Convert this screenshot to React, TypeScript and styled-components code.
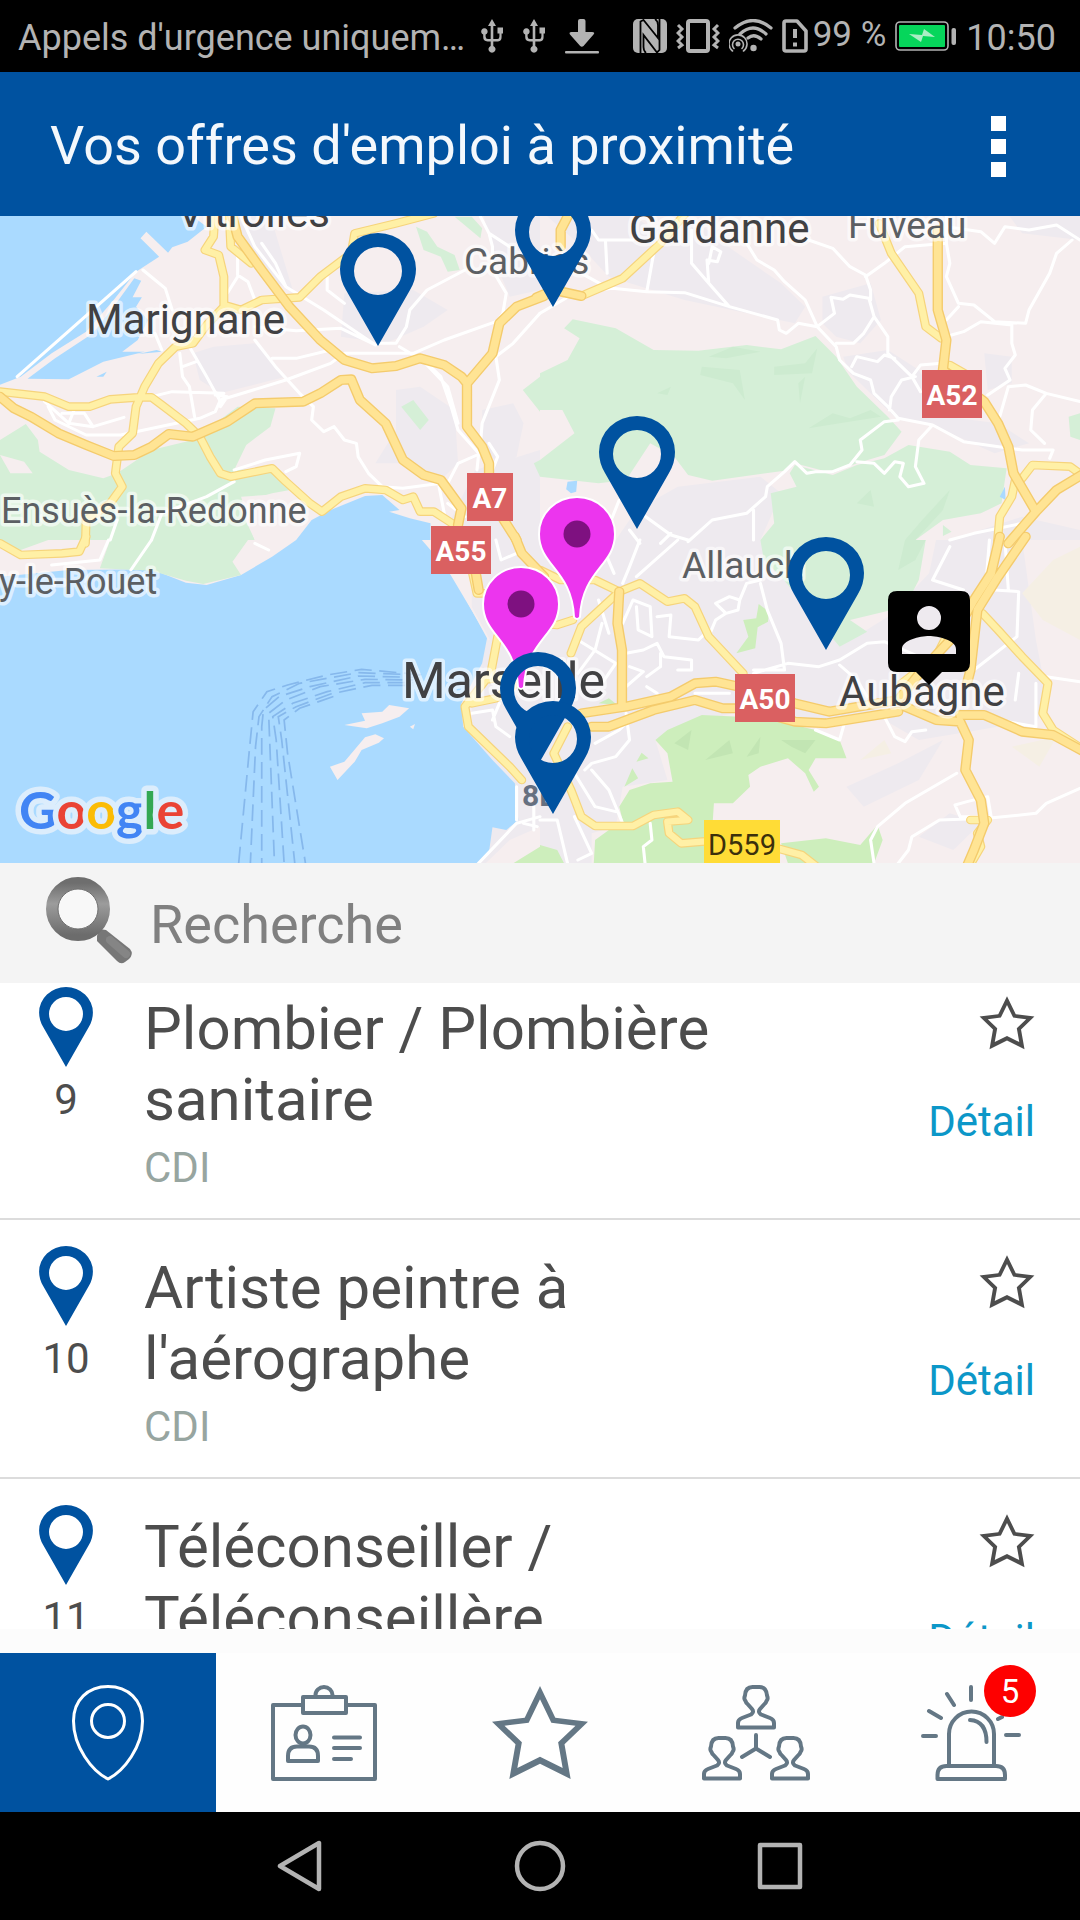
import React, { useLayoutEffect, useRef, useState } from "react";
import styled, { createGlobalStyle } from "styled-components";

const BLUE = "#0052a0";
const SLATE = "#647785";
const SILVER = "#b3b3b3";
const INK = "#4d4d4d";

const GlobalStyle = createGlobalStyle`
  * { box-sizing: border-box; }
  body { margin: 0; background: #fcfcfc; }
  button, input { font: inherit; color: inherit; border: 0; margin: 0; padding: 0; background: none; }
  button { cursor: pointer; }
  svg { display: block; flex: none; }
`;

const Screen = styled.div`
  display: flex;
  flex-direction: column;
  height: 100vh;
  overflow: hidden;
  font-family: Roboto, "Noto Sans", sans-serif;
  color: ${INK};
`;

/* ---------- status bar ---------- */

const StatusBar = styled.div`
  display: flex;
  align-items: center;
  justify-content: space-between;
  flex: none;
  height: 72px;
  padding: 0 24px 0 18px;
  background: #000;
  color: ${SILVER};
  font-size: 36px;
  line-height: 42px;
  white-space: nowrap;
`;

const StatusGroup = styled.div<{ $gap: number }>`
  display: flex;
  align-items: center;
  gap: ${(p) => p.$gap}px;
`;

const StatusText = styled.span`
  padding-top: 4px;
`;

const BatteryLevel = styled.span`
  font-size: 35px;
  padding-bottom: 2px;
`;

const UsbIcon = () => (
  <svg width="22" height="34" viewBox="0 0 22 34" fill={SILVER}>
    <path d="M11 0 15 7H12.300V20H16.500Q18.400 20 18.400 17.500V14.500H16.500V8.500H22V14.500H20.600V18Q20.600 22.400 17 22.400H12.300V27A3.500 3.500 0 1 1 9.700 27V22.400H6.500Q2.200 22.400 2.200 18V15.500A3.200 3.200 0 1 1 4.600 15.500V17.500Q4.600 20 7 20H9.700V7H7Z" />
  </svg>
);

const DownloadIcon = () => (
  <svg width="34" height="35" viewBox="0 0 34 35" fill={SILVER}>
    <path d="M13 2Q13 0 15 0H18.500Q20.500 0 20.500 2V13H27Q30.500 13 28.500 15.500L18.500 27Q16.800 28.600 15.200 27L5 15.500Q3.500 13 6.500 13H13Z" />
    <rect y="32" width="34" height="2.500" rx="1" />
  </svg>
);

const NfcIcon = () => (
  <svg width="34" height="34" viewBox="0 0 34 34" fill={SILVER}>
    <rect width="34" height="34" rx="5" />
    <path d="M7.500 0V34M26.500 0V34M8 2 26 28" fill="none" stroke="none" />
    <path d="M7.500 34V2.500L10.500 1 25 19V6Q25 2 22 0" fill="none" stroke="#000" strokeWidth="1.800" />
    <path d="M26.500 0V31L24 33.500 10.500 16V28Q10.500 32 13 34" fill="none" stroke="#000" strokeWidth="1.800" />
  </svg>
);

const VibrateIcon = () => (
  <svg width="44" height="34" viewBox="0 0 44 34" fill="none" stroke={SILVER}>
    <rect x="12" y="2" width="20" height="30" rx="2" strokeWidth="4" />
    <path d="M2 6 6 10 2 14 6 18 2 22 6 26 2 29M42 6 38 10 42 14 38 18 42 22 38 26 42 29" strokeWidth="3" />
  </svg>
);

const WifiIcon = () => (
  <svg width="44" height="34" viewBox="0 0 44 34" fill="none" stroke={SILVER} strokeWidth="3.200" strokeLinecap="round">
    <path d="M6 9Q24-6 42 9M11 15Q24 3 37 15M19 19Q25 14 32 20" />
    <circle cx="24.500" cy="29" r="3.200" fill={SILVER} stroke="none" />
    <circle cx="9" cy="25" r="2.500" fill={SILVER} stroke="none" />
    <path d="M5 29.500A5.500 5.500 0 1 1 13 29.500M3.500 32A9 9 0 1 1 14.500 32" strokeWidth="1.600" />
  </svg>
);

const SimIcon = () => (
  <svg width="26" height="34" viewBox="0 0 26 34" fill="none" stroke={SILVER}>
    <path d="M4 2H15L24 12V30Q24 32 22 32H4Q2 32 2 30V4Q2 2 4 2Z" strokeWidth="3.600" strokeLinejoin="round" />
    <path d="M13 10V19M13 23.500V27.500" strokeWidth="4" />
  </svg>
);

const BatteryIcon = () => (
  <svg width="62" height="30" viewBox="0 0 62 30">
    <rect x="1" y="1" width="52" height="28" rx="4" fill="none" stroke={SILVER} strokeWidth="1.600" />
    <rect x="4" y="4" width="46" height="22" rx="1" fill="#06d65b" />
    <path d="M14 13 27 14 29 8 40 16 28 15 26 21Z" fill="#a9eec4" />
    <rect x="56.500" y="7" width="4.500" height="17" rx="2" fill={SILVER} />
  </svg>
);

/* ---------- title bar ---------- */

const TitleBar = styled.header`
  display: flex;
  align-items: center;
  justify-content: space-between;
  flex: none;
  height: 144px;
  padding: 4px 64px 0 50px;
  background: ${BLUE};
  color: #f4f8fc;
`;

const Title = styled.h1`
  margin: 0;
  font-size: 54px;
  line-height: 64px;
  font-weight: 400;
`;

const MenuButton = styled.button`
  display: flex;
  flex-direction: column;
  align-items: center;
  gap: 8px;
  padding: 10px;
`;

const MenuDot = styled.span`
  width: 15px;
  height: 15px;
  background: #fff;
`;

/* ---------- map ---------- */

const MapArea = styled.section`
  flex: none;
  width: 100%;
  aspect-ratio: 1080 / 647;
  overflow: hidden;
`;

const MapCanvas = styled.svg`
  width: 100%;
  height: 100%;
`;

const PlaceName = styled.text<{ $size: number; $minor?: boolean }>`
  font-size: ${(p) => p.$size}px;
  fill: ${(p) => (p.$minor ? "#5c5f63" : "#414143")};
  stroke: #fff;
  stroke-opacity: 0.6;
  stroke-width: 7px;
  stroke-linejoin: round;
  paint-order: stroke;
`;

const ShieldText = styled.text<{ $dark?: boolean }>`
  font-size: ${(p) => (p.$dark ? 29 : 28)}px;
  font-weight: ${(p) => (p.$dark ? 400 : 700)};
  fill: ${(p) => (p.$dark ? "#3b300c" : "#fff")};
  text-anchor: middle;
`;

const DistrictText = styled.text`
  font-size: 30px;
  font-weight: 700;
  fill: #667080;
`;

const LogoText = styled.text`
  font-family: Lato, sans-serif;
  font-size: 52px;
  font-weight: 700;
  stroke: #dcedfc;
  stroke-width: 11px;
  stroke-linejoin: round;
  paint-order: stroke;
`;

type Quadrant = {
  x: number;
  y: number;
  areas: [string, string][];
  streets: string[];
  roads: string[];
  motorways: string[];
};

const WATER = "#aadaff";
const LAND = "#f6eeef";
const TOWN = "#eeeaef";
const PARK = "#d5efd7";
const WOOD = "#cdeebc";
const SHADE = "#cdebd0";

const QUADRANTS: Quadrant[] = [
  {
    x: 0,
    y: 210,
    areas: [
      [TOWN, "M560 430 620 410 740 400 830 500 640 550 580 510ZM1150 540 1220 530 1320 600 1330 760 1280 810 1200 760 1090 760 1150 660ZM1400 600 1490 580 1520 640 1500 740 1450 770 1400 700ZM690 0H780L850 240 760 200 700 120ZM1000 250 1200 240 1300 300 1230 350 1120 400 990 380ZM1400 0H1568V240L1480 260 1440 160ZM1380 780 1568 720V990H1280Z"],
      [WATER, "M0 0H535L600 50 545 95 500 112 488 128 425 65 408 85 462 140 395 185 330 270 250 365 150 430 60 500 0 524Z"],
      [WATER, "M390 205 410 212 385 262 412 262 395 290 430 330 400 390 355 425 420 425 300 455 200 508 80 506 160 445 270 370 330 290ZM455 420 470 425 400 432ZM280 500 310 485 300 500Z"],
      [PARK, "M0 690 75 642 110 690 115 725 200 780 300 805 340 790 440 720 560 690 690 590 800 595 785 650 715 705 680 780 790 775 870 835 790 850 690 880 740 990H0ZM1208 50 1240 65 1270 110 1320 135 1335 180 1300 185 1280 140 1230 120ZM1320 20H1370L1400 55 1395 85ZM1165 590 1200 570 1245 630 1220 660ZM1518 540 1568 500V605ZM1550 760 1568 750V800Z"],
      [LAND, "M0 735 70 755 95 790 30 790Z"],
      [LAND, "M700 860 850 850 930 910 870 990H740L720 930Z"],
      [WATER, "M860 990 905 930 960 900 1060 858 1110 855 1160 900 1130 905 1190 925 1250 940V990Z"],
    ],
    streets: [
      "M130 575 200 640 270 650 360 622",
      "M140 590 160 630 250 675 350 675 580 625 625 605 640 570 830 510 960 460 1000 430 1200 430 1290 390 1440 335",
      "M180 610 245 610 270 650M200 640 215 600",
      "M640 575 600 500 550 410 520 390M530 470 570 455",
      "M640 590 660 560 625 555",
      "M700 20 740 110 830 230 940 300 1090 405",
      "M760 100 800 160 830 230",
      "M740 390 800 470 870 550 910 590 905 630 940 665 970 650 1000 690 1035 700 1040 740 1070 790 1110 830 1170 835 1280 820",
      "M522 430 530 500 550 530 565 620M440 560 500 545 650 550",
      "M1100 400H1150L1180 350 1190 300 1240 240 1350 180",
      "M1395 20 1420 70 1430 110 1430 180 1470 250 1460 310 1440 340",
      "M1420 70 1480 110",
      "M1160 410 1240 460 1280 500 1310 590 1330 660 1390 730 1385 780",
      "M1240 465 1300 530 1330 640",
      "M1568 310 1490 400 1440 440 1450 510 1400 640 1395 700",
      "M415 180 480 235 500 300M395 185 50 500",
      "M690 120 690 195 720 215 740 270M690 200 660 250",
      "M740 350 860 362 990 355 1090 405M790 445 860 445 960 420M950 200 950 240 1000 280",
      "M450 370 470 420",
      "M870 730 860 770 830 785M680 780 770 750 870 730",
      "M320 990 340 930M440 990 470 910 600 860 680 815",
      "M1385 735 1330 760 1300 820 1275 830 1290 910M1420 700 1445 740 1430 780M1300 880 1350 920",
    ],
    roads: [
      "M0 545 130 560 200 590 260 590 320 568 400 562H440L470 585 540 640 580 680 610 740 640 790 670 800 790 775 830 815 900 880 935 905 990 860 1060 835 1120 840 1170 870 1200 860 1220 905 1260 905 1320 945",
      "M625 0 620 80 595 120 635 135 650 200V285L700 300 760 270 870 262 930 200 1020 130 1030 70 1150 40 1260 10",
      "M650 290 600 345 560 400 510 410 460 460 420 530 395 590 385 670 345 710 335 790 355 830 320 880 250 930 248 1000",
      "M665 0 670 110 730 160",
    ],
    motorways: [
      "M0 560 40 595 90 620 170 670 250 705 330 738 390 735 440 710 490 672 560 680 660 635 740 580 880 575 930 550 990 510 1020 508 1045 570 1120 640 1170 750 1230 795 1280 810 1340 895 1330 945",
      "M670 0 690 80 760 180 840 290 930 390 1000 450 1080 475 1150 468 1220 445 1290 465 1340 500 1356 520V650L1400 710 1420 760V860L1500 990",
      "M1356 520 1430 430 1450 340 1500 290 1580 258",
    ],
  },
  {
    x: 540,
    y: 210,
    areas: [
      [TOWN, "M0 0H250L330 60 450 30 560 120 700 220 770 290 740 340 650 320 420 270 200 200 100 90ZM820 260 960 220 990 330 930 400 860 380 820 340ZM880 440 1010 420 1100 480 1180 620 1330 640 1420 700 1320 730 1150 650 1030 620 900 490ZM400 830 640 800 700 850 640 990H220L280 900ZM1290 430 1370 440V520L1300 540ZM1280 960 1400 920 1568 960V990H1200ZM1350 0H1568V90L1400 70Z"],
      [PARK, "M70 355 95 328 220 355 330 420 460 422 600 405 700 418 800 378 860 440 920 530 1010 620 1050 665 1000 735 920 760 850 790 740 760 710 782 500 812 430 795 390 740 320 700 250 810 170 820 0 800V750L100 670 65 600 0 600V490L80 450 115 385Z"],
      [LAND, "M315 715 345 730 340 790H312Z"],
      [SHADE, "M490 440 560 410 640 425 540 445ZM470 470 580 480 595 570 560 520 465 495ZM680 470 770 460 805 415 790 490 680 495ZM750 520 770 500 755 580ZM780 655 850 610 900 625 960 600 990 620 870 640ZM340 550 380 530 370 555Z"],
      [PARK, "M740 765 850 795 920 765 1000 745 1070 705 1190 725 1250 765 1355 775 1340 880 1280 910 1170 930 1090 990H640L680 940 670 850 745 830 725 790Z"],
      [SHADE, "M1190 840 1170 900 1090 990H1060L1110 930ZM920 880 960 840 970 890Z"],
      [PARK, "M1535 620 1568 610V690L1540 680ZM1170 945 1195 965 1170 978Z"],
      [WATER, "M80 815 108 812 105 845 90 850 76 838ZM1335 860 1350 830 1352 870Z"],
    ],
    streets: [
      "M0 310 100 250 210 235 310 245 420 248 550 290 690 330 695 360 715 370 750 340 805 350 860 410 870 450 910 490 960 510 970 550 1010 590 1040 625 1140 645 1230 695 1400 720 1490 720 1480 745",
      "M600 100 630 150 680 180 710 215 770 270 805 350 855 310 845 262 880 268 900 255 955 265 970 320 1010 380 1010 430 1080 500 1105 465 1165 460",
      "M440 60V160L490 220 550 290M490 160 500 110 525 125 515 155 485 150 490 220",
      "M780 90 850 115 900 170 945 195 960 240V270",
      "M945 200 1000 160 1060 110 1180 100M1180 20V100L1190 160 1180 200 1215 280 1260 285 1320 335 1410 340 1420 300 1480 190 1500 130 1545 90",
      "M1215 290 1180 330M1195 375 1230 365 1280 335 1370 345V400L1380 435 1350 475 1365 510 1300 555",
      "M1180 50 1280 65 1320 100 1350 50 1420 60 1500 45 1568 90",
      "M1360 530 1410 525 1470 550 1568 575M1470 550 1430 600 1425 660 1465 700M1360 530 1335 620",
      "M1040 630 1000 635 930 690 935 720 900 765 850 785 800 785 775 790 740 755 710 785 660 830 655 860 600 910 500 930 430 995",
      "M1140 645 1100 690 1090 770 1115 820 1070 830 1045 800 1055 760 1030 755 1000 790 970 760 920 755",
      "M905 470 920 440 980 455 1000 435 1030 445M1090 500 1050 510 1020 560 1015 600M1080 500 1105 545",
      "M300 915 380 975 430 990M620 900V990M860 400H910L940 370 970 320M190 90 195 190M330 130 310 245M150 60 170 90 270 90M120 190 200 235",
      "M230 870 180 1000M380 970 350 1000M260 960 290 1000M1190 990 1260 970 1400 940",
    ],
    roads: [
      "M985 40 1020 130 1100 250 1120 350 1165 385",
      "M1400 805 1430 765 1540 770 1580 800",
      "M1380 810 1370 860 1335 920 1328 1000",
      "M120 258 240 205 350 100 430 0",
      "M1190 465 1250 500",
    ],
    motorways: [
      "M1155 60V300L1180 390 1170 480 1290 575 1330 640 1360 710 1375 790 1440 905 1360 1000",
      "M1440 905 1500 840 1580 790",
      "M-10 262 40 240 120 258",
      "M90 0 60 60V110",
    ],
  },
  {
    x: 0,
    y: 540,
    areas: [
      [TOWN, "M1370 0H1568V990H1370Z"],
      [WATER, "M0 110 200 90 440 88 540 128 600 135 700 105 790 50 860 0H1225L1300 90 1415 290 1400 370 1340 490 1345 560 1430 660 1495 730 1505 840 1470 870 1430 862 1420 935 1370 990H0Z"],
      [PARK, "M0 0H140L60 30 0 20ZM320 0H720L675 65 700 105 590 132 540 122 440 92 290 85Z"],
      [LAND, "M1000 555 1060 542 1050 520 1110 515 1130 495 1188 505 1160 530 1110 550 1065 565ZM958 680 1000 665 1060 592 1090 583 1115 595 1100 608 1050 630 1030 665 980 720ZM1190 560 1205 552 1200 568Z"],
      [LAND, "M1568 860 1480 900 1410 970H1568Z"],
      [WOOD, "M1490 970 1568 920V970Z"],
    ],
    streets: [
      "M315 0 290 60 150 75M440 0 380 90M740 10 780 30",
      "M1380 980 1500 850 1568 830M1370 520 1430 510 1440 560 1480 590M1430 540 1450 490",
      "M1500 740 1500 840M1550 800V870M1440 0 1455 60 1500 40M1440 130 1460 180M1520 850 1560 860",
    ],
    roads: [
      "M0 10 60 45 180 40 230 35 250 -10",
      "M1370 90 1385 160 1420 160",
      "M1445 290 1425 400 1350 500 1360 560 1420 620 1480 680 1515 720",
      "M1370 490 1440 475 1500 430",
      "M1400 420 1480 410",
    ],
    motorways: ["M1495 -10 1515 40 1580 110", "M1380 90 1390 150"],
  },
  {
    x: 540,
    y: 540,
    areas: [
      [TOWN, "M0 0H640L700 110 870 320 1010 230 1130 100 1150 0H1400L1440 300 1470 460 1440 560 1330 560 1100 600 1000 540 700 540 560 520 400 560 335 600 370 720 240 740 220 860 150 880V990H0Z"],
      [PARK, "M640 0H1120L1100 120 1060 200 900 240 950 275 870 320 700 110 650 60Z"],
      [SHADE, "M1060 0H1120L1090 60 1040 90Z"],
      [WOOD, "M335 600 370 570 470 525 580 530 700 545 800 570 870 600 890 655 800 655 780 690 810 740 795 755 770 700 720 655 640 680 605 705 610 740 560 790 505 790 500 870 480 990H155L160 900 240 840 230 800 260 750 320 730 385 725 370 640ZM700 910 830 895 930 915 980 855 995 900 970 970H720ZM0 915 50 930 70 970H0ZM570 340 605 290 590 240 628 235 635 192 665 215 662 245 632 262 625 325ZM280 665 295 638 315 655ZM245 740 268 685 285 715ZM170 490 200 475 225 495Z"],
      ["#c2e5b3", "M390 610 440 570 430 630ZM480 660 550 600 560 640ZM600 650 640 590 635 640ZM700 600 800 600 770 640 730 620Z"],
      [TOWN, "M890 740 1040 670 1170 600 1100 720 940 800ZM1100 890 1190 820 1280 850 1200 930Z"],
      ["#f5efe4", "M1400 160 1490 60 1568 20V300L1460 240ZM930 660 1000 600 1020 640ZM1370 620 1500 590 1450 680Z"],
    ],
    streets: [
      "M640 130 660 210 700 310 710 390 620 390M620 400 720 370 810 380 870 360 950 310 1000 305 1090 345",
      "M870 375 920 420 950 470M1000 530 1030 590 1060 605 1080 575 1120 570M800 570 870 600 885 545",
      "M1190 20 1140 120 1230 150M1305 0 1295 130 1320 150 1390 155 1385 290 1260 390M1350 0 1360 150",
      "M1470 410 1568 425M1440 430V560L1330 540M1390 400 1380 480",
      "M1210 700 1060 790 980 860 960 900 970 970M1568 745 1470 790 1440 820 1300 835 1160 840 1080 890 1070 930 1040 970",
      "M1240 785 1205 795 1220 830 1310 830 1300 770 1240 785",
      "M170 180 200 280M280 200 285 270 325 290 320 200 270 180 240 250M340 230 380 225 375 290 460 300 490 270",
      "M250 340 300 330 340 310 360 350 440 360 440 390 400 390M350 340 350 380 310 410M260 380 300 395 250 440",
      "M400 0 280 110M290 0 260 80 240 130M190 40 215 100M510 190 550 170 580 180 575 210 540 220 510 190M580 180 600 130 640 120M490 290 510 240 540 220",
      "M250 520 260 600 220 650 150 670 130 690M160 610 230 570 250 550M100 700 160 800 220 815M150 690 200 750 240 850",
      "M0 840 50 840 80 970M100 830 150 940 110 960M320 850 325 900 300 920 305 970M180 250 160 330 110 400M110 300 220 370 180 430",
      "M310 440 340 460M450 460 550 460",
    ],
    roads: [
      "M0 90 60 120 160 120 230 155 290 130 370 185 420 175 450 200 490 290 590 400",
      "M230 155 120 260 90 340",
      "M1285 220 1330 270 1400 350 1475 430 1460 520 1490 570 1580 630",
      "M90 750 120 830 160 858H270L330 825 400 815 430 840 370 845 375 880 410 910 470 905 560 900",
      "M690 925 760 945 810 985",
      "M0 250 50 255 95 240",
      "M80 560 40 640 90 750",
      "M1250 840 1300 840 1270 880 1280 920 1240 990",
      "M1180 290 1150 350 1050 430",
    ],
    motorways: [
      "M230 155 225 250 238 330V500",
      "M120 520 250 500 380 470 450 430 510 425 600 445 740 490 840 515 1040 480 1110 390 1200 290 1260 180 1310 100 1335 -10",
      "M150 560 200 560 330 510 450 480 530 505 600 505 740 545 830 550 1040 515",
      "M1410 -10 1330 110 1270 210 1250 390 1240 430",
      "M1060 500 1150 540 1220 545 1245 600 1235 690 1280 780 1290 850 1260 930 1235 990",
      "M1220 525 1290 525 1400 575 1490 585 1580 635",
    ],
  },
];

const FERRIES = [
  "M693 970 725 620 735 515 775 455 835 435 950 405 1050 388 1230 405",
  "M727 970 742 620 752 530 790 470 870 430 1040 398 1220 405",
  "M760 970V560L765 510 810 470 900 440 1040 408 1200 412",
  "M797 970 783 600 780 520 830 480 930 440 1060 418 1200 420",
  "M825 970 802 600 792 530 850 490 950 455 1060 428 1200 428",
  "M856 970 818 600 808 530 860 500 960 462 1080 436 1200 436",
  "M887 970 835 640 825 540 870 505 980 465",
];

const place = (q: Quadrant) => `translate(${q.x} ${q.y}) scale(${540 / 1568} ${1 / 3})`;

const PIN_SHAPE =
  "M0 0-32-56Q-38-66-38-77A38 36 0 0 1 38-77Q38-66 32-56ZM24-75A24 24 0 1 0-24-75A24 24 0 1 0 24-75Z";

const JobPin = ({ x, y }: { x: number; y: number }) => (
  <path transform={`translate(${x} ${y})`} d={PIN_SHAPE} fill={BLUE} fillRule="evenodd" />
);

const ClusterPin = ({ x, y }: { x: number; y: number }) => (
  <g transform={`translate(${x} ${y})`}>
    <path
      d="M-3-3C-5-50-38-54-38-86A38 37 0 0 1 38-86C38-54 5-50 3-3Q0 1-3-3Z"
      fill="#ec35ee"
      stroke="#fff"
      strokeWidth="2"
    />
    <circle cy="-86" r="13.500" fill="#7e1180" />
  </g>
);

const Shield = ({ x, y, w, children, dark }: { x: number; y: number; w: number; children: string; dark?: boolean }) => (
  <g>
    <rect x={x} y={y} width={w} height="48" fill={dark ? "#ffdc36" : "#da6061"} />
    <ShieldText x={x + w / 2} y={y + 35} $dark={dark}>
      {children}
    </ShieldText>
  </g>
);

const JobMap = () => (
  <MapArea aria-label="Carte des offres">
    <MapCanvas viewBox="0 216 1080 647" preserveAspectRatio="xMidYMid slice">
      <rect y="200" width="1080" height="680" fill={LAND} />
      {QUADRANTS.map((q, i) => (
        <g key={i} transform={place(q)}>
          {q.areas.map(([fill, d], n) => (
            <path key={n} d={d} fill={fill} />
          ))}
        </g>
      ))}
      <g transform={place(QUADRANTS[2])} fill="none" stroke="#86b8ec" strokeWidth="5" strokeDasharray="50 22">
        {FERRIES.map((d, n) => (
          <path key={n} d={d} strokeDashoffset={n * 17} />
        ))}
        <path d="M1260 30 1330 130 1420 300" stroke={LAND} strokeDasharray="none" />
      </g>
      <g fill="none" strokeLinecap="round" strokeLinejoin="round">
        {QUADRANTS.map((q, i) => (
          <path key={i} transform={place(q)} d={q.streets.join("")} stroke="#fff" strokeWidth="9" />
        ))}
        {QUADRANTS.map((q, i) => (
          <path key={i} transform={place(q)} d={q.roads.join("")} stroke="#f6d47c" strokeWidth="26" />
        ))}
        {QUADRANTS.map((q, i) => (
          <path key={i} transform={place(q)} d={q.roads.join("")} stroke="#fff0a6" strokeWidth="19" />
        ))}
        {QUADRANTS.map((q, i) => (
          <path key={i} transform={place(q)} d={q.motorways.join("")} stroke="#f4cb6c" strokeWidth="30" />
        ))}
        {QUADRANTS.map((q, i) => (
          <path key={i} transform={place(q)} d={q.motorways.join("")} stroke="#ffe494" strokeWidth="22" />
        ))}
      </g>

      <PlaceName $size={42} x="177" y="227">Vitrolles</PlaceName>
      <PlaceName $size={42} x="86" y="334">Marignane</PlaceName>
      <PlaceName $size={42} x="629" y="243">Gardanne</PlaceName>
      <PlaceName $size={42} x="839" y="706">Aubagne</PlaceName>
      <PlaceName $size={50} x="402" y="698">Marseille</PlaceName>
      <PlaceName $size={37} $minor x="464" y="274">Cabriès</PlaceName>
      <PlaceName $size={37} $minor x="848" y="238">Fuveau</PlaceName>
      <PlaceName $size={36} $minor x="1" y="523">Ensuès-la-Redonne</PlaceName>
      <PlaceName $size={36} $minor x="-1" y="594">y-le-Rouet</PlaceName>
      <PlaceName $size={37} $minor x="682" y="578">Allauch</PlaceName>
      <DistrictText x="522" y="806">8E</DistrictText>

      <Shield x={467} y={473} w={46}>A7</Shield>
      <Shield x={431} y={526} w={60}>A55</Shield>
      <Shield x={922} y={370} w={60}>A52</Shield>
      <Shield x={735} y={674} w={60}>A50</Shield>
      <Shield x={704} y={820} w={76} dark>D559</Shield>

      <LogoText x="19" y="829">
        <tspan fill="#4285f4">G</tspan>
        <tspan fill="#ea4335">o</tspan>
        <tspan fill="#fbbc05">o</tspan>
        <tspan fill="#4285f4">g</tspan>
        <tspan fill="#34a853">l</tspan>
        <tspan fill="#ea4335">e</tspan>
      </LogoText>

      <JobPin x={378} y={346} />
      <JobPin x={553} y={307} />
      <JobPin x={637} y={529} />
      <ClusterPin x={577} y={620} />
      <ClusterPin x={521} y={690} />
      <JobPin x={826} y={650} />
      <JobPin x={538} y={765} />
      <JobPin x={553} y={814} />
      <path
        fillRule="evenodd"
        d="M897 591H961Q970 591 970 600V663Q970 672 961 672H942L929 685 916 672H897Q888 672 888 663V600Q888 591 897 591ZM929 606A12 12 0 1 0 929 630A12 12 0 1 0 929 606ZM902 654H956V649C956 640 938 636 929 636S902 640 902 649Z"
      />
    </MapCanvas>
  </MapArea>
);

/* ---------- search ---------- */

const SearchBar = styled.label`
  display: flex;
  align-items: center;
  gap: 16px;
  flex: none;
  height: 120px;
  padding: 0 44px;
  background: #f4f4f4;
`;

const SearchInput = styled.input`
  flex: 1;
  min-width: 0;
  font-size: 54px;
  line-height: 64px;
  padding-top: 4px;
  outline: none;
  &::placeholder {
    color: #808080;
    opacity: 1;
  }
`;

const Magnifier = () => (
  <svg width="90" height="98" viewBox="0 0 90 98">
    <defs>
      <linearGradient id="lens-ring" x1="0" y1="0" x2="0" y2="1">
        <stop offset="0" stopColor="#6e6e6e" />
        <stop offset="0.400" stopColor="#9c9c9c" />
        <stop offset="1" stopColor="#6c6c6c" />
      </linearGradient>
    </defs>
    <path d="M55 55 62 56 86 75Q90 80 85 85L81 88Q77 91 73 87L53 67V62Z" fill="#777" />
    <path d="M66 66 82 80" stroke="#858585" strokeWidth="8" strokeLinecap="round" />
    <circle cx="34" cy="35" r="26" fill="#f8f8f8" stroke="url(#lens-ring)" strokeWidth="12" />
    <circle cx="34" cy="35" r="20" fill="none" stroke="#6f6f6f" strokeWidth="1" />
  </svg>
);

/* ---------- job list ---------- */

const JobList = styled.ul`
  flex: 1;
  min-height: 0;
  margin: 0 0 24px;
  padding: 0;
  list-style: none;
  overflow-y: auto;
  background: #fff;
  scrollbar-width: none;
`;

const JobRow = styled.li`
  display: grid;
  grid-template-columns: 132px 1fr 192px;
  column-gap: 12px;
  padding: 26px 45px 25px 0;
  border-bottom: 2px solid #dcdcdc;
`;

const Marker = styled.div`
  display: flex;
  flex-direction: column;
  align-items: center;
  gap: 8px;
  font-size: 42px;
  line-height: 50px;
`;

const JobText = styled.div`
  padding-top: 6px;
`;

const JobTitle = styled.h2`
  margin: 0 0 8px;
  font-size: 60px;
  line-height: 71px;
  font-weight: 400;
`;

const Contract = styled.p`
  margin: 0;
  font-size: 42px;
  line-height: 50px;
  color: #97a5a0;
`;

const Actions = styled.div`
  display: flex;
  flex-direction: column;
  align-items: flex-end;
  gap: 46px;
  padding-top: 8px;
`;

const DetailLink = styled.a`
  font-size: 42px;
  line-height: 50px;
  color: #0c97c8;
  text-decoration: none;
`;

const STAR = "0,-50 15,-19 47,-15 24,7 30,41 0,26 -30,41 -24,7 -47,-15 -15,-19";

const Star = ({ width, color, inner }: { width: number; color: string; inner: number }) => (
  <svg width={width} height={width} viewBox="-48 -52 96 96">
    <polygon points={STAR} fill={color} />
    <polygon points={STAR} fill="#fff" transform={`scale(${inner})`} />
  </svg>
);

const jobs = [
  { id: 9, title: "Plombier / Plombière sanitaire", contract: "CDI" },
  { id: 10, title: "Artiste peintre à l'aérographe", contract: "CDI" },
  { id: 11, title: "Téléconseiller / Téléconseillère", contract: "CDI" },
];

/* ---------- tabs ---------- */

const Tabs = styled.nav`
  display: grid;
  grid-template-columns: repeat(5, 1fr);
  flex: none;
  height: 159px;
  background: #fefefe;
`;

const Tab = styled.button<{ $active: boolean }>`
  display: flex;
  align-items: center;
  justify-content: center;
  background: ${(p) => (p.$active ? BLUE : "transparent")};
  color: ${(p) => (p.$active ? "#fff" : SLATE)};
`;

const TabIcon = styled.svg<{ $thin?: boolean }>`
  width: 108px;
  height: 96px;
  overflow: visible;
  fill: none;
  stroke: currentColor;
  stroke-width: ${(p) => (p.$thin ? 3 : 4)}px;
  stroke-linecap: round;
  stroke-linejoin: round;
`;

const BadgeAnchor = styled.span`
  position: relative;
  display: block;
`;

const Badge = styled.span`
  position: absolute;
  top: -20px;
  right: -10px;
  width: 52px;
  height: 52px;
  border-radius: 50%;
  background: #fe0000;
  color: #fff;
  font-size: 33px;
  line-height: 54px;
  text-align: center;
`;

const BUST =
  "M-18 42.500V38Q-18 34.500-14 33L-5 29.500Q-1.500 27-4 24L-8 19.500Q-10 18-10.500 16Q-12.500 14-11 10.500Q-10.500 2-3.500 2H3.500Q10.500 2 11 10.500Q12.500 14 10.500 16Q10 18 8 19.500L4 24Q1.500 27 5 29.500L14 33Q18 34.500 18 38V42.500Z";

const NearbyIcon = () => (
  <TabIcon viewBox="0 0 108 96" $thin>
    <path d="M54 94C38 86 19.500 62 19.500 36C19.500 15 34 1.500 54 1.500S88.500 15 88.500 36C88.500 62 70 86 54 94Z" />
    <circle cx="54" cy="36" r="16.500" />
  </TabIcon>
);

const ProfileIcon = () => (
  <TabIcon viewBox="0 0 108 96">
    <path d="M32 20H3V94H105V20H76" />
    <rect x="33" y="12" width="43" height="16" />
    <path d="M45.500 11V10A8.500 8 0 0 1 62.500 10V11" />
    <ellipse cx="33" cy="50" rx="7.500" ry="8.500" />
    <path d="M18 76V71Q18 61.500 27 61.500H39Q48 61.500 48 71V76Z" />
    <path d="M64 52.500H90M64 63H90M64 74H81" />
  </TabIcon>
);

const NetworkIcon = () => (
  <TabIcon viewBox="0 0 108 96">
    <path d={BUST} transform="translate(54 0)" />
    <path d={BUST} transform="translate(20 51)" />
    <path d={BUST} transform="translate(88 51)" />
    <path d="M54 50V63.500L40 72M54 63.500 68 72" />
  </TabIcon>
);

const AlertIcon = () => (
  <TabIcon viewBox="0 0 108 96">
    <path d="M31 80V49A22.500 22.500 0 0 1 76 49V80" />
    <path d="M19.500 94V90Q19.500 81 28.500 81H78Q87 81 87 90V94Z" />
    <path d="M52 35Q68.500 36 68.500 57" />
    <path d="M53 2V15M29 9 36 20M11 26 23 33M5 51H18M88 50H101M84 32 80 34" />
  </TabIcon>
);

const tabs = [
  { label: "À proximité", icon: <NearbyIcon /> },
  { label: "Profil", icon: <ProfileIcon /> },
  { label: "Favoris", icon: <Star width={98} color={SLATE} inner={0.74} /> },
  { label: "Réseau", icon: <NetworkIcon /> },
  { label: "Alertes", icon: <AlertIcon />, badge: 5 },
];

/* ---------- system navigation ---------- */

const SystemBar = styled.div`
  display: grid;
  grid-template-columns: repeat(3, 1fr);
  flex: none;
  height: 108px;
  padding: 0 calc(100% / 6);
  background: #000;
`;

const SystemButton = styled.button`
  display: flex;
  align-items: center;
  justify-content: center;
`;

const systemShapes = [
  { label: "Retour", d: "M6 26 45 3V49Z" },
  { label: "Accueil", d: "M26 3A23 23 0 1 1 26 49A23 23 0 1 1 26 3Z" },
  { label: "Applications récentes", d: "M6 5H46V47H6Z" },
];

export default function App() {
  const listRef = useRef<HTMLUListElement>(null);
  const [active, setActive] = useState(0);

  useLayoutEffect(() => {
    if (listRef.current) listRef.current.scrollTop = 22;
  }, []);

  return (
    <Screen>
      <GlobalStyle />
      <StatusBar>
        <StatusGroup $gap={16}>
          <StatusText>Appels d'urgence uniquem…</StatusText>
          <StatusGroup $gap={20}>
            <UsbIcon />
            <UsbIcon />
            <DownloadIcon />
          </StatusGroup>
        </StatusGroup>
        <StatusGroup $gap={9}>
          <NfcIcon />
          <VibrateIcon />
          <WifiIcon />
          <StatusGroup $gap={5}>
            <SimIcon />
            <BatteryLevel>99 %</BatteryLevel>
          </StatusGroup>
          <BatteryIcon />
          <StatusText>10:50</StatusText>
        </StatusGroup>
      </StatusBar>

      <TitleBar>
        <Title>Vos offres d'emploi à proximité</Title>
        <MenuButton aria-label="Menu">
          <MenuDot />
          <MenuDot />
          <MenuDot />
        </MenuButton>
      </TitleBar>

      <JobMap />

      <SearchBar>
        <Magnifier />
        <SearchInput type="text" placeholder="Recherche" aria-label="Recherche" />
      </SearchBar>

      <JobList ref={listRef}>
        {jobs.map((job) => (
          <JobRow key={job.id}>
            <Marker>
              <svg width="54" height="80" viewBox="-38 -113 76 113">
                <path d={PIN_SHAPE} fill={BLUE} fillRule="evenodd" />
              </svg>
              {job.id}
            </Marker>
            <JobText>
              <JobTitle>{job.title}</JobTitle>
              <Contract>{job.contract}</Contract>
            </JobText>
            <Actions>
              <button aria-label={`Ajouter l'offre ${job.id} aux favoris`}>
                <Star width={56} color={INK} inner={0.7} />
              </button>
              <DetailLink href={`#offre-${job.id}`}>Détail</DetailLink>
            </Actions>
          </JobRow>
        ))}
      </JobList>

      <Tabs>
        {tabs.map((tab, i) => (
          <Tab key={tab.label} $active={i === active} aria-label={tab.label} onClick={() => setActive(i)}>
            <BadgeAnchor>
              {tab.icon}
              {tab.badge && <Badge>{tab.badge}</Badge>}
            </BadgeAnchor>
          </Tab>
        ))}
      </Tabs>

      <SystemBar>
        {systemShapes.map((shape) => (
          <SystemButton key={shape.label} aria-label={shape.label}>
            <svg width="52" height="52" viewBox="0 0 52 52" fill="none" stroke={SILVER} strokeWidth="4.500" strokeLinejoin="round">
              <path d={shape.d} />
            </svg>
          </SystemButton>
        ))}
      </SystemBar>
    </Screen>
  );
}
